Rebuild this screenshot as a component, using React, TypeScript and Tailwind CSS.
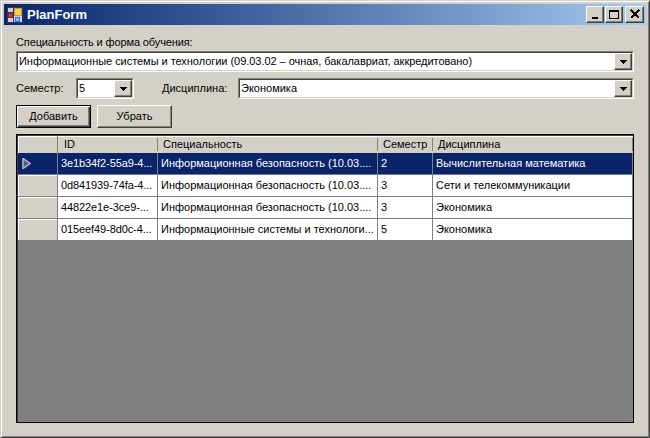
import React from 'react';

const rows = [
  { id: '3e1b34f2-55a9-4...', spec: 'Информационная безопасность (10.03....', sem: '2', disc: 'Вычислительная математика', selected: true },
  { id: '0d841939-74fa-4...', spec: 'Информационная безопасность (10.03....', sem: '3', disc: 'Сети и телекоммуникации' },
  { id: '44822e1e-3ce9-...', spec: 'Информационная безопасность (10.03....', sem: '3', disc: 'Экономика' },
  { id: '015eef49-8d0c-4...', spec: 'Информационные системы и технологи...', sem: '5', disc: 'Экономика' },
];

const bevel = 'border border-t-white border-l-white border-r-[#404040] border-b-[#404040] shadow-[inset_-1px_-1px_0_#808080]';

const ComboArrow = () => (
  <div className={`w-[18px] h-full flex-none bg-[#d4d0c8] flex items-center justify-center ${bevel}`}>
    <svg width="7" height="4" viewBox="0 0 7 4" shapeRendering="crispEdges">
      <path d="M0 0h7v1h-1v1h-1v1h-1v1h-1v-1h-1v-1h-1v-1h-1z" fill="#000" />
    </svg>
  </div>
);

const Combo: React.FC<{ value: string; className: string; textClass?: string }> = ({ value, className, textClass }) => (
  <div className={`h-[21px] bg-white flex items-center border border-t-[#808080] border-l-[#808080] border-r-white border-b-white ${className}`}>
    <div className="flex-1 min-w-0 h-full flex items-center justify-between border border-t-[#404040] border-l-[#404040] border-r-[#d4d0c8] border-b-[#d4d0c8] pl-[1px]">
      <span className={`truncate ${textClass ?? ''}`}>{value}</span>
      <ComboArrow />
    </div>
  </div>
);

const CaptionButton: React.FC<{ children: React.ReactNode; className?: string }> = ({ children, className }) => (
  <div className={`w-[18px] h-[17px] bg-[#d4d0c8] flex items-center justify-center ${bevel} ${className ?? ''}`}>
    <svg width="14" height="13" viewBox="0 0 14 13" shapeRendering="crispEdges">{children}</svg>
  </div>
);

export default function App() {
  return (
    <div className="w-[650px] h-[438px] bg-[#d4d0c8] flex flex-col p-[3px] border border-t-[#d4d0c8] border-l-[#d4d0c8] border-r-[#404040] border-b-[#404040] shadow-[inset_1px_1px_0_#fff,inset_-1px_-1px_0_#808080] font-['Liberation_Sans',sans-serif] text-[11px] text-black overflow-hidden">
      <div className="h-[21px] flex-none flex items-center justify-between pl-[3px] pr-[2px] bg-gradient-to-r from-[#0a246a] to-[#a6caf0]">
        <div className="flex items-center gap-[4px]">
          <svg width="16" height="16" viewBox="0 0 16 16" shapeRendering="crispEdges">
            <rect width="16" height="16" fill="#2a3a70" />
            <rect x="1" y="5" width="14" height="10" fill="#d4d0c8" />
            <rect x="1" y="1" width="5" height="4" fill="#d4d0c8" />
            <rect x="6" y="1" width="1" height="14" fill="#2a3a70" />
            <rect x="1" y="5" width="5" height="1" fill="#2a3a70" />
            <rect x="1" y="6" width="5" height="5" fill="#a02020" />
            <rect x="2" y="7" width="3" height="3" fill="#e83030" />
            <rect x="7" y="1" width="8" height="8" fill="#d89818" />
            <rect x="8" y="2" width="6" height="6" fill="#f8d050" />
            <rect x="8" y="10" width="5" height="5" fill="#3878d8" />
            <rect x="9" y="11" width="3" height="3" fill="#80b8f0" />
          </svg>
          <span className="pt-[1px] font-bold text-[13px] text-white">PlanForm</span>
        </div>
        <div className="flex items-center">
          <CaptionButton><rect x="4" y="9" width="6" height="2" fill="#000" /></CaptionButton>
          <CaptionButton className="ml-[1px]"><path d="M2 2h10v2h-10z M2 4h1v6h-1z M11 4h1v6h-1z M2 10h10v1h-10z" fill="#000" /></CaptionButton>
          <CaptionButton className="ml-[2px] w-[19px]"><path d="M3 2 11 10 M11 2 3 10" fill="none" stroke="#000" strokeWidth="2" /></CaptionButton>
        </div>
      </div>

      <div className="flex-1 min-h-0 flex flex-col pt-[10px] px-[12px] pb-[11px]">
        <div className="h-[15px] leading-[15px] tracking-[-0.12px]">Специальность и форма обучения:</div>
        <Combo value="Информационные системы и технологии (09.03.02 – очная, бакалавриат, аккредитовано)" className="mt-[1px] w-full" textClass="tracking-[-0.04px]" />

        <div className="flex items-center mt-[6px]">
          <span className="w-[60px]">Семестр:</span>
          <Combo value="5" className="w-[58px]" />
          <span className="ml-[28px] w-[76px]">Дисциплина:</span>
          <Combo value="Экономика" className="flex-1 min-w-0" />
        </div>

        <div className="flex mt-[6px] gap-[6px]">
          <button className="w-[75px] h-[23px] bg-[#d4d0c8] border border-black shadow-[inset_1px_1px_0_#fff,inset_-1px_-1px_0_#404040,inset_-2px_-2px_0_#808080]">Добавить</button>
          <button className={`w-[75px] h-[23px] ${bevel}`}>Убрать</button>
        </div>

        <div className="mt-[6px] flex-1 min-h-0 bg-[#808080] border border-black pt-[1px] pl-[1px] shadow-[inset_1px_1px_0_#404040]">
          <div className="grid grid-cols-[40px_100px_220px_55px_1fr]">
            <div className="h-[17px] bg-[#d4d0c8] border-r border-[#808080] shadow-[inset_1px_1px_0_#fff]" />
            {['ID', 'Специальность', 'Семестр', 'Дисциплина'].map((h, i) => (
              <div key={h} className="h-[17px] bg-[#d4d0c8] shadow-[inset_0_1px_0_#fff] flex items-center">
                <span className={`flex-1 h-[13px] leading-[13px] border-r border-[#808080] whitespace-nowrap ${i === 0 ? 'pl-[6px]' : 'pl-[5px]'}`}>{h}</span>
              </div>
            ))}
            {rows.map((r) => {
              const cell = `h-[22px] flex items-center pl-[3px] border-r border-b border-[#808080] whitespace-nowrap ${r.selected ? 'bg-[#0a246a] text-white' : 'bg-white'}`;
              return (
                <React.Fragment key={r.id}>
                  <div className={`h-[22px] flex items-center pl-[4px] border-r border-b border-[#808080] ${r.selected ? 'bg-[#0a246a]' : 'bg-[#d4d0c8] shadow-[inset_1px_1px_0_#fff]'}`}>
                    {r.selected && (
                      <svg width="9" height="11" viewBox="0 0 9 11"><path d="M1 .5 8 5.5 1 10.5z" fill="#505a80" stroke="#b8b8b8" strokeWidth="1.5" /></svg>
                    )}
                  </div>
                  <div className={cell}><span className="tracking-[-0.1px]">{r.id}</span></div>
                  <div className={cell}>{r.spec}</div>
                  <div className={cell}>{r.sem}</div>
                  <div className={cell}>{r.disc}</div>
                </React.Fragment>
              );
            })}
          </div>
        </div>
      </div>
    </div>
  );
}
